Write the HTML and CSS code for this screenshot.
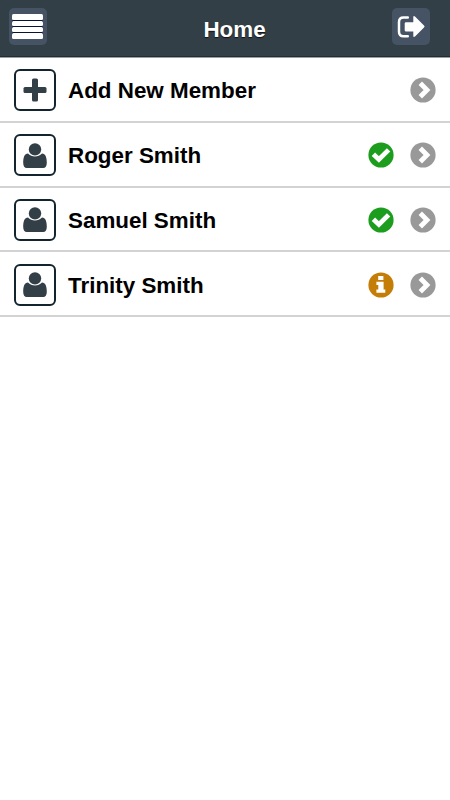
FILE: index.html
```html
<!DOCTYPE html>
<html lang="en">
<head>
  <meta charset="UTF-8">
  <meta name="viewport" content="width=device-width, initial-scale=1.0">
  <title>Home</title>
  <link rel="stylesheet" href="styles.css">
</head>
<body>
  <svg width="0" height="0" class="icon-defs">
    <symbol id="icon-user" viewBox="0 0 24 25">
      <circle cx="12" cy="6.4" r="6.2"/>
      <path d="M5 10.600C6.900 12.600 9.300 13.500 12 13.500s5.100-.9 7-2.900c3.500.2 4.800 3.600 4.800 9.200 0 3.500-1.400 5.200-3.600 5.200H3.800C1.600 25 .2 23.300.2 19.800.2 14.200 1.500 10.800 5 10.600z"/>
    </symbol>
    <symbol id="icon-arrow" viewBox="0 0 26 26">
      <circle cx="13" cy="13" r="12.6" fill="#999"/>
      <path d="M10.300 6.300L17 13L10.300 19.700" fill="none" stroke="#fff" stroke-width="4.800"/>
    </symbol>
    <symbol id="icon-check" viewBox="0 0 26 26">
      <circle cx="13" cy="13" r="12.6" fill="#1d9d1d"/>
      <path d="M5.400 12.200L10.900 17.500L20.600 7.900" fill="none" stroke="#fff" stroke-width="4.800"/>
    </symbol>
    <symbol id="icon-info" viewBox="0 0 26 26">
      <circle cx="13" cy="13" r="12.6" fill="#c47e07"/>
      <path d="M10.200 4h5.200v4h-5.200zM8.400 9.700h7.200v7.700h1.700v3.300H8.400v-3.300h1.900v-4.400H8.400z" fill="#fff"/>
    </symbol>
  </svg>

  <header class="header">
    <button class="header-btn" aria-label="Menu">
      <span class="bars"><i></i><i></i><i></i><i></i></span>
    </button>
    <h1>Home</h1>
    <button class="header-btn" aria-label="Logout">
      <svg width="38" height="37" viewBox="0 0 38 37">
        <path d="M15.800 9.500H11.500Q7 9.500 7 14V23.700Q7 28.200 11.500 28.200H15.800" fill="none" stroke="#fff" stroke-width="2.500" stroke-linecap="round"/>
        <path d="M14 14.300h7.300V9.200q0-2.100 1.700-.8l9 9q1.200 1.100 0 2.200l-9 9q-1.700 1.300-1.700-.8v-4.300H14q-1.300 0-1.300-1.300v-6.600q0-1.300 1.300-1.300z" fill="#fff"/>
      </svg>
    </button>
  </header>

  <ul class="members">
    <li>
      <span class="thumb">
        <svg width="24" height="24" viewBox="0 0 24 24"><rect x="9" y="0.500" width="6" height="23" rx="1.500" fill="#323f47"/><rect x="0.500" y="9" width="23" height="6" rx="1.500" fill="#323f47"/></svg>
      </span>
      <span class="name">Add New Member</span>
      <svg class="icon"><use href="#icon-arrow"/></svg>
    </li>
    <li>
      <span class="thumb"><svg class="user"><use href="#icon-user"/></svg></span>
      <span class="name">Roger Smith</span>
      <svg class="icon"><use href="#icon-check"/></svg>
      <svg class="icon"><use href="#icon-arrow"/></svg>
    </li>
    <li>
      <span class="thumb"><svg class="user"><use href="#icon-user"/></svg></span>
      <span class="name">Samuel Smith</span>
      <svg class="icon"><use href="#icon-check"/></svg>
      <svg class="icon"><use href="#icon-arrow"/></svg>
    </li>
    <li>
      <span class="thumb"><svg class="user"><use href="#icon-user"/></svg></span>
      <span class="name">Trinity Smith</span>
      <svg class="icon"><use href="#icon-info"/></svg>
      <svg class="icon"><use href="#icon-arrow"/></svg>
    </li>
  </ul>
</body>
</html>
```
FILE: styles.css
```css
* {
  box-sizing: border-box;
}
body {
  margin: 0;
  background-color: #fff;
  color: #000;
  font-family: "Liberation Sans", Arial, sans-serif;
}
.icon-defs {
  display: none;
}
.header {
  display: flex;
  align-items: center;
  justify-content: space-between;
  height: 58px;
  padding: 0 20px 4px 9px;
  background-color: #323f47;
  border-bottom: 1px solid #9a9ea4;
  box-shadow: inset 0 -1px 0 #1f2d34;
}
.header h1 {
  margin: 6px 0 0 30px;
  color: #fff;
  font-size: 22.4px;
  font-weight: bold;
  line-height: 26px;
  text-shadow: 0 1px 1px #111;
}
.header-btn {
  display: flex;
  align-items: center;
  justify-content: center;
  width: 38px;
  height: 37px;
  padding: 0;
  border: none;
  border-radius: 5px;
  background-color: #455364;
}
.bars {
  display: flex;
  flex-direction: column;
  gap: 1px;
  width: 31px;
  margin-right: 1px;
}
.bars i {
  height: 5.3px;
  border-radius: 1.5px;
  background-color: #fff;
}
.bars i + i {
  box-shadow: 0 -1px 0 #0a1238;
}
.members {
  margin: 0;
  padding: 0;
  list-style: none;
}
.members li {
  display: flex;
  align-items: center;
  height: 64.8px;
  padding: 2px 14px 0;
  border-bottom: 2px solid #d3d3d3;
}
.thumb {
  display: flex;
  align-items: center;
  justify-content: center;
  width: 42px;
  height: 42px;
  border: 2px solid #14242e;
  border-radius: 6px;
}
.user {
  width: 24px;
  height: 25px;
  fill: #323f47;
}
.name {
  flex: 1;
  margin-top: 2px;
  margin-left: 12px;
  font-size: 22.4px;
  font-weight: bold;
}
.icon {
  width: 26px;
  height: 26px;
  margin-left: 16px;
}
```
